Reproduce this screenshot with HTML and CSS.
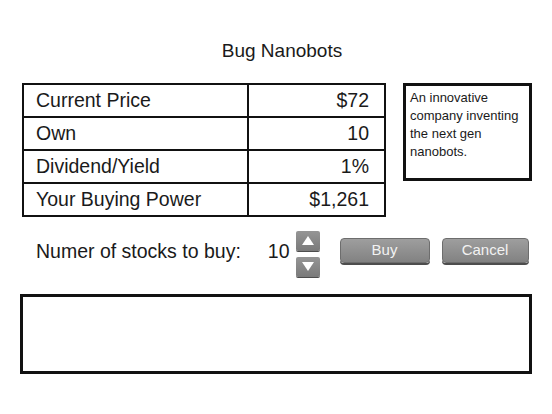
FILE: index.html
```html
<!DOCTYPE html>
<html lang="en">
<head>
	<meta charset="UTF-8">
	<title>Bug Nanobots</title>
	<link rel="stylesheet" href="styles.css">
</head>
<body>
	<div class="page">
		<h1 class="title">Bug Nanobots</h1>

		<div class="info">
			<div class="stats">
				<div class="cell label">Current Price</div>
				<div class="cell value">$72</div>
				<div class="cell label">Own</div>
				<div class="cell value">10</div>
				<div class="cell label">Dividend/Yield</div>
				<div class="cell value">1%</div>
				<div class="cell label">Your Buying Power</div>
				<div class="cell value">$1,261</div>
			</div>
			<div class="desc">An innovative company inventing the next gen nanobots.</div>
		</div>

		<div class="order">
			<span class="order-label">Numer of stocks to buy:</span>
			<span class="qty">10</span>
			<div class="spin">
				<button class="spin-btn" type="button">
					<svg width="12" height="9" viewBox="0 0 12 9"><polygon points="6,0 12,9 0,9" fill="#fff"/></svg>
				</button>
				<button class="spin-btn" type="button">
					<svg width="12" height="9" viewBox="0 0 12 9"><polygon points="0,0 12,0 6,9" fill="#fff"/></svg>
				</button>
			</div>
			<button class="btn btn-buy" type="button">Buy</button>
			<button class="btn btn-cancel" type="button">Cancel</button>
		</div>

		<div class="log"></div>
	</div>
</body>
</html>
```

FILE: styles.css
```css
html,body{margin:0;padding:0;background:#fff;}
body{font-family:"Liberation Sans",Arial,sans-serif;color:#1a1a1a;}

.page{padding:40px 20px 0 20px;width:512px;}

.title{margin:0 0 21px 0;padding-left:12px;font-size:19px;font-weight:normal;line-height:22px;text-align:center;}

/* price table + description */
.info{display:flex;align-items:flex-start;gap:17px;margin-left:2px;}
.stats{display:grid;grid-template-columns:223px 135px;grid-auto-rows:31px;gap:2px;padding:2px;background:#111;}
.stats .cell{background:#fff;font-size:19.5px;line-height:31px;white-space:nowrap;}
.stats .label{padding-left:12px;}
.stats .value{padding-right:15px;text-align:right;}

.desc{box-sizing:border-box;width:129px;height:98px;border:3px solid #111;padding:3px 4px 0 4px;font-size:13px;line-height:18px;}

/* order row */
.order{display:flex;align-items:center;margin:13px 0 0 16px;height:47px;}
.order-label{font-size:19.5px;margin-bottom:5px;}
.qty{font-size:19.5px;margin:0 6px 5px 27px;}
.spin{display:flex;flex-direction:column;gap:6px;}
.spin-btn{display:flex;align-items:center;justify-content:center;width:24px;height:20px;padding:0;border:none;border-radius:2px;background:linear-gradient(#959595,#7a7a7a);box-shadow:0 1px 0 #4d4d4d;}

.btn{height:25px;padding:0 0 2px 0;margin-bottom:6px;border:1px solid #6d6d6d;border-radius:4px;background:linear-gradient(#9e9e9e,#828282);box-shadow:0 2px 0 #4d4d4d;color:#f2f2f2;font:15px "Liberation Sans",Arial,sans-serif;}
.btn-buy{width:90px;margin-left:20px;}
.btn-cancel{width:87px;margin-left:12px;}

.log{box-sizing:border-box;height:80px;margin-top:17px;border:3px solid #111;}
```
